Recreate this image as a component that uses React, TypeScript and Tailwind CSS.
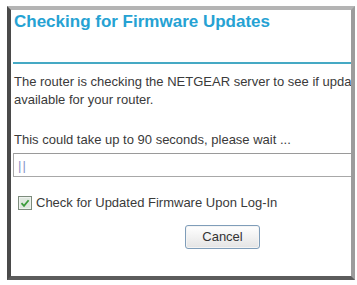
import React from 'react';

const CheckIcon = () => (
  <svg width="14" height="14" viewBox="0 0 14 14" className="shrink-0">
    <rect x="0.5" y="0.5" width="13" height="13" fill="#eef3ee" stroke="#7d8c7d" />
    <rect x="2" y="2" width="10" height="10" fill="#dfe8df" />
    <path d="M3.5 7.2 L6 9.8 L10.6 4.2" fill="none" stroke="#3c9c3c" strokeWidth="1.8" />
  </svg>
);

export default function App() {
  return (
    <div className="w-[357px] h-[285px] bg-white overflow-hidden pt-[6px] pl-[7px] font-['Liberation_Sans',Arial,sans-serif]">
      <div className="w-[348px] h-[274px] overflow-hidden border-[4px] border-t-[#b4b4b4] border-r-[#9c9c9c] border-b-[#5c5c5c] border-l-[#4a4a4a] bg-white">
        <div className="w-[420px] pl-[3px]">
          <h1 className="pt-[2px] text-[17px] leading-[20px] font-bold text-[#26a2d3] whitespace-nowrap">
            Checking for Firmware Updates
          </h1>
          <div className="mt-[30px] w-[338px] -ml-[1px] h-[2px] bg-[#45a9c4]" />

          <p className="mt-[9px] text-[13px] leading-[18px] text-[#3a3a3a] whitespace-nowrap">
            The router is checking the NETGEAR server to see if updated firmware is
            <br />
            available for your router.
          </p>
          <p className="mt-[22px] text-[13px] leading-[18px] text-[#3a3a3a] whitespace-nowrap">
            This could take up to 90 seconds, please wait ...
          </p>

          <div className="mt-[4px] -ml-[1px] h-[24px] border border-[#a8a8a8] border-t-[#9a9a9a] bg-white flex items-center pl-[4px]">
            <span className="text-[13px] leading-none text-[#8a93c8] tracking-[1px]">||</span>
          </div>

          <label className="mt-[17px] flex items-center gap-[4px] pl-[4px] text-[13px] leading-[18px] text-[#3a3a3a] whitespace-nowrap">
            <CheckIcon />
            Check for Updated Firmware Upon Log-In
          </label>

          <div className="mt-[13px] flex justify-center">
            <button className="w-[75px] h-[24px] rounded-[3px] border border-[#7f9db9] bg-gradient-to-b from-white to-[#e4e4e4] text-[13px] text-[#333] shadow-[inset_0_0_0_1px_#f4f4f4]">
              Cancel
            </button>
          </div>
        </div>
      </div>
    </div>
  );
}
